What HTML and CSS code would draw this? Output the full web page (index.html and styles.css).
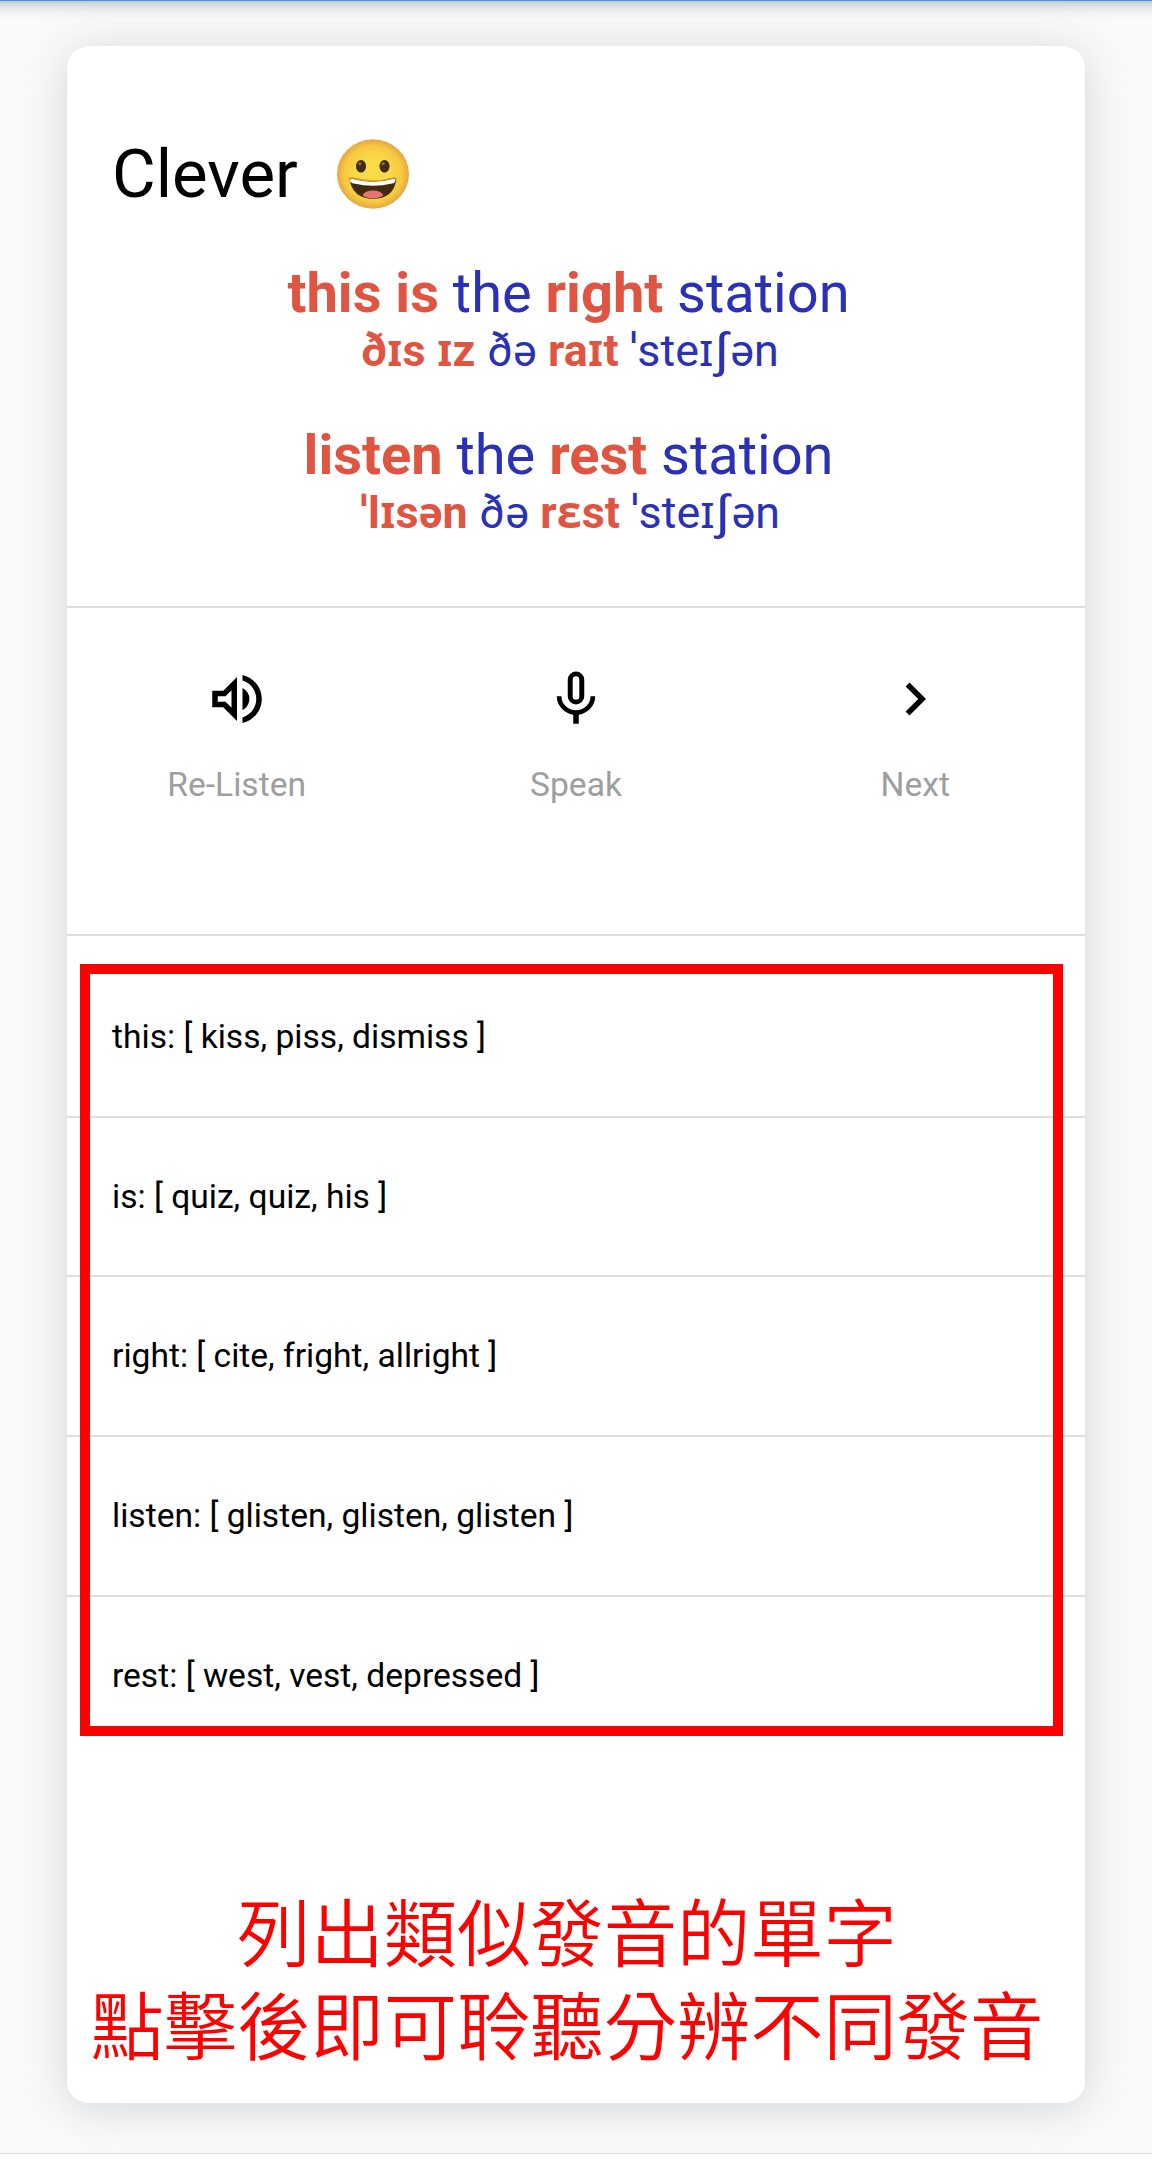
FILE: index.html
```
<!DOCTYPE html>
<html lang="zh-Hant">
<head>
<meta charset="utf-8">
<title>Clever</title>
<link rel="stylesheet" href="styles.css">
</head>
<body>
<div class="topbar"></div>
<main class="card">
  <header class="result">
    <h1 class="title">Clever
      <svg class="emoji" viewBox="0 0 72 70">
        <defs>
          <radialGradient id="face" cx="50%" cy="50%" r="50%">
            <stop offset="0.45" stop-color="#fadb45"/>
            <stop offset="0.8" stop-color="#f6ca40"/>
            <stop offset="1" stop-color="#e8a542"/>
          </radialGradient>
        </defs>
        <ellipse cx="36" cy="35" rx="36" ry="34.7" fill="url(#face)"/>
        <ellipse cx="24" cy="27.3" rx="5" ry="6.3" fill="#422b0d"/>
        <ellipse cx="47.5" cy="27.3" rx="5" ry="6.3" fill="#422b0d"/>
        <circle cx="22.7" cy="24.8" r="1.7" fill="#8a6647"/>
        <circle cx="46.2" cy="24.8" r="1.7" fill="#8a6647"/>
        <path d="M12.5 40.5Q13 38.7 16 39.5Q36 45 55.500 39.500Q59.500 38.500 59 42Q56 59.500 36 60Q16 59.500 12.500 40.500Z" fill="#422b0d"/>
        <path d="M25.500 56.500Q28 51.500 36 51.500Q44 51.500 46.500 56.500Q42 59.500 36 59.500Q30 59.500 25.500 56.500Z" fill="#e57373"/>
        <path d="M12.800 41.500Q12.500 39 16 40Q36 45.500 55.500 40Q59 39 58.700 41.500Q58 44 55 44.500Q36 49 17 44.500Q13.500 44 12.800 41.500Z" fill="#fff"/>
        <path d="M11.700 41.500Q11.800 38 16 39Q36 44.600 55.500 39Q59.700 38 59.600 41.500" fill="none" stroke="#e39a1f" stroke-width="1.300"/>
      </svg>
    </h1>
    <section class="phrase">
      <p class="words"><b>this</b> <b>is</b> the <b>right</b> station&nbsp;</p>
      <p class="ipa"><b>ðɪs</b> <b>ɪz</b> ðə <b>raɪt</b> ˈsteɪ<span class="esh">ʃ</span>ən&nbsp;</p>
    </section>
    <section class="phrase">
      <p class="words"><b>listen</b> the <b>rest</b> station&nbsp;</p>
      <p class="ipa"><b>ˈlɪsən</b> ðə <b>rɛst</b> ˈsteɪ<span class="esh">ʃ</span>ən&nbsp;</p>
    </section>
  </header>
  <nav class="actions">
    <div class="action">
      <svg class="icon" viewBox="0 0 24 24"><path d="M3 9v6h4l5 5V4L7 9H3zm7-.17v6.340L7.830 13H5v-2h2.830L10 8.830zM16.500 12A4.500 4.500 0 0 0 14 7.970v8.050c1.480-.730 2.500-2.250 2.500-4.020zM14 3.230v2.060c2.890.860 5 3.540 5 6.710s-2.110 5.850-5 6.710v2.060c4.010-.910 7-4.490 7-8.770s-2.990-7.860-7-8.770z"/></svg>
      <span class="label">Re-Listen</span>
    </div>
    <div class="action">
      <svg class="icon" viewBox="0 0 24 24"><path d="M12 14a3 3 0 0 0 3-3V5a3 3 0 0 0-6 0v6a3 3 0 0 0 3 3zm-1.200-9.100a1.200 1.200 0 0 1 2.400 0v6.200a1.200 1.200 0 0 1-2.400 0V4.900zm6.500 6.100c0 3-2.540 5.100-5.300 5.100S6.700 14 6.700 11H5c0 3.410 2.720 6.230 6 6.720V21h2v-3.280c3.280-.480 6-3.300 6-6.720h-1.700z"/></svg>
      <span class="label">Speak</span>
    </div>
    <div class="action">
      <svg class="icon" viewBox="0 0 24 24"><path d="M10 6L8.590 7.410 13.170 12l-4.580 4.590L10 18l6-6z"/></svg>
      <span class="label">Next</span>
    </div>
  </nav>
  <div class="rhymes">
    <ul class="list">
      <li>this: [ kiss, piss, dismiss ]</li>
      <li>is: [ quiz, quiz, his ]</li>
      <li>right: [ cite, fright, allright ]</li>
      <li>listen: [ glisten, glisten, glisten ]</li>
      <li>rest: [ west, vest, depressed ]</li>
    </ul>
    <div class="highlight"></div>
  </div>
  <p class="caption">列出類似發音的單字<br>點擊後即可聆聽分辨不同發音</p>
</main>
<footer class="bottombar"></footer>
</body>
</html>
```
FILE: styles.css
```
* { box-sizing: border-box; margin: 0; padding: 0; }
body {
  width: 1152px;
  height: 2160px;
  overflow: hidden;
  display: flex;
  flex-direction: column;
  background: #fafafa;
  color: #000;
  font-family: Roboto, "Noto Sans", sans-serif;
}
.topbar {
  height: 20px;
  background: linear-gradient(#5090d4 0 1px, #b4cade 1px 2px, #ced0d2 2px, #e3e4e4 7px, #f2f3f3 13px, #fafafa 20px);
}
.card {
  width: 1018px;
  height: 2057px;
  margin: 26px 0 0 67px;
  border-radius: 22px;
  background: #fff;
  box-shadow: 0 5px 45px rgba(84, 110, 122, 0.25);
}
.result { height: 562px; padding: 88px 46px 0 45px; border-bottom: 2px solid #dedede; }
.title {
  display: flex;
  align-items: center;
  gap: 39px;
  height: 80px;
  font-size: 67.2px;
  font-weight: 400;
}
.emoji { width: 72px; height: 70px; }
.phrase { height: 162px; text-align: center; color: #2a31b5; }
.title + .phrase { margin-top: 46px; }
.phrase b { color: #e05541; font-weight: 700; }
.words { font-size: 56px; line-height: 66px; }
.ipa { font-size: 44.8px; line-height: 49px; letter-spacing: 0.1px; }
.esh { display: inline-block; margin: 0 2.5px; transform: scaleX(1.25); }
.actions { display: flex; height: 328px; padding-top: 58px; border-bottom: 2px solid #dedede; }
.action { flex: 1; display: flex; flex-direction: column; align-items: center; gap: 33px; }
.icon { width: 66px; height: 66px; }
.label { font-size: 33.6px; line-height: 40px; color: #9e9e9e; }
.rhymes { position: relative; height: 863px; padding-top: 22px; }
.list { list-style: none; }
.list li {
  display: flex;
  align-items: center;
  height: 159.700px;
  padding: 0 0 1px 45px;
  font-size: 33.6px;
  border-bottom: 2px solid #dedede;
}
.list li:last-child { border-color: transparent; }
.highlight {
  position: absolute;
  left: 13px;
  top: 28px;
  width: 983px;
  height: 772px;
  border: 10px solid #f00;
}
.caption {
  padding-top: 84px;
  padding-right: 18px;
  text-align: center;
  white-space: nowrap;
  color: #f00;
  font-family: "Noto Sans CJK TC", sans-serif;
  font-size: 73.300px;
  font-weight: 350;
  line-height: 93px;
}
.bottombar { height: 7px; margin-top: 50px; background: #fff; border-top: 1px solid #dcdcdc; }
```
